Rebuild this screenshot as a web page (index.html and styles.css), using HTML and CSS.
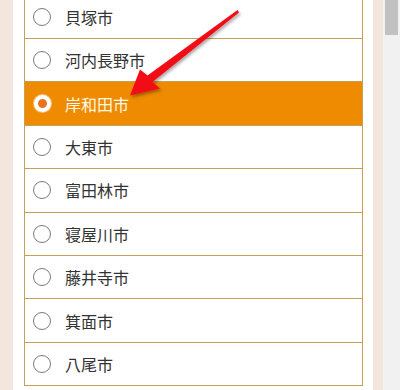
FILE: index.html
```html
<!DOCTYPE html>
<html lang="ja">
<head>
<meta charset="utf-8">
<link rel="stylesheet" href="styles.css">
</head>
<body>
<div class="page">
  <div class="side-left"></div>
  <div class="main">
    <ul class="list">
      <li class="row"><span class="radio"></span><span class="label">貝塚市</span></li>
      <li class="row"><span class="radio"></span><span class="label">河内長野市</span></li>
      <li class="row selected"><span class="radio"></span><span class="label">岸和田市</span></li>
      <li class="row"><span class="radio"></span><span class="label">大東市</span></li>
      <li class="row"><span class="radio"></span><span class="label">富田林市</span></li>
      <li class="row"><span class="radio"></span><span class="label">寝屋川市</span></li>
      <li class="row"><span class="radio"></span><span class="label">藤井寺市</span></li>
      <li class="row"><span class="radio"></span><span class="label">箕面市</span></li>
      <li class="row"><span class="radio"></span><span class="label">八尾市</span></li>
    </ul>
  </div>
  <div class="side-right"></div>
  <div class="scrollbar"><div class="thumb"></div></div>
</div>
<svg class="arrow" width="400" height="390" viewBox="0 0 400 390">
  <defs>
    <filter id="sh" x="-20%" y="-20%" width="140%" height="140%">
      <feDropShadow dx="1.5" dy="2" stdDeviation="1.5" flood-color="#000" flood-opacity="0.35"/>
    </filter>
  </defs>
  <polygon filter="url(#sh)" fill="#f20d14"
    points="237.5,10 239,12.5 152.5,82 160,88.5 130,95.5 140,69.5 147.5,75.5"/>
</svg>
</body>
</html>
```
FILE: styles.css
```css
html, body {
  margin: 0;
  padding: 0;
  height: 390px;
  overflow: hidden;
}
body {
  position: relative;
  background: #ffffff;
  font-family: "Noto Sans CJK JP", "Noto Sans", sans-serif;
}
.page {
  display: flex;
  height: 390px;
}
.side-left {
  width: 13px;
  background: #f4e6dd;
}
.main {
  width: 360px;
  padding: 0 10px 0 11px;
  box-sizing: border-box;
  background: #ffffff;
}
.side-right {
  width: 10px;
  background: #f4e6dd;
}
.scrollbar {
  width: 17px;
  background: #f1f1f1;
  padding: 0 2px;
  box-sizing: border-box;
}
.thumb {
  height: 35px;
  background: #c1c1c1;
}
.list {
  list-style: none;
  margin: -5.4px 0 0 0;
  padding: 0;
  width: 339px;
  border: 1px solid #c4a055;
  border-bottom: none;
  box-sizing: border-box;
}
.row {
  display: flex;
  align-items: center;
  height: 42.4px;
  border-bottom: 1px solid #c4a055;
  padding-left: 8px;
  background: #ffffff;
}
.radio {
  width: 18px;
  height: 18px;
  border: 1px solid #7a7a7a;
  border-radius: 50%;
  box-sizing: border-box;
  background: #ffffff;
  flex: none;
}
.label {
  margin-left: 14px;
  font-size: 16px;
  color: #333333;
}
.row.selected {
  background: #ee8b00;
}
.row.selected .radio {
  width: 17px;
  height: 17px;
  margin-left: 0.5px;
  margin-right: 0.5px;
  border: 4px solid #ffffff;
  background: #e8731e;
  box-shadow: 0 0 0 1px #f7c37a;
}
.row.selected .label {
  color: #fff8e6;
}
.arrow {
  position: absolute;
  left: 0;
  top: 0;
  pointer-events: none;
}
```
